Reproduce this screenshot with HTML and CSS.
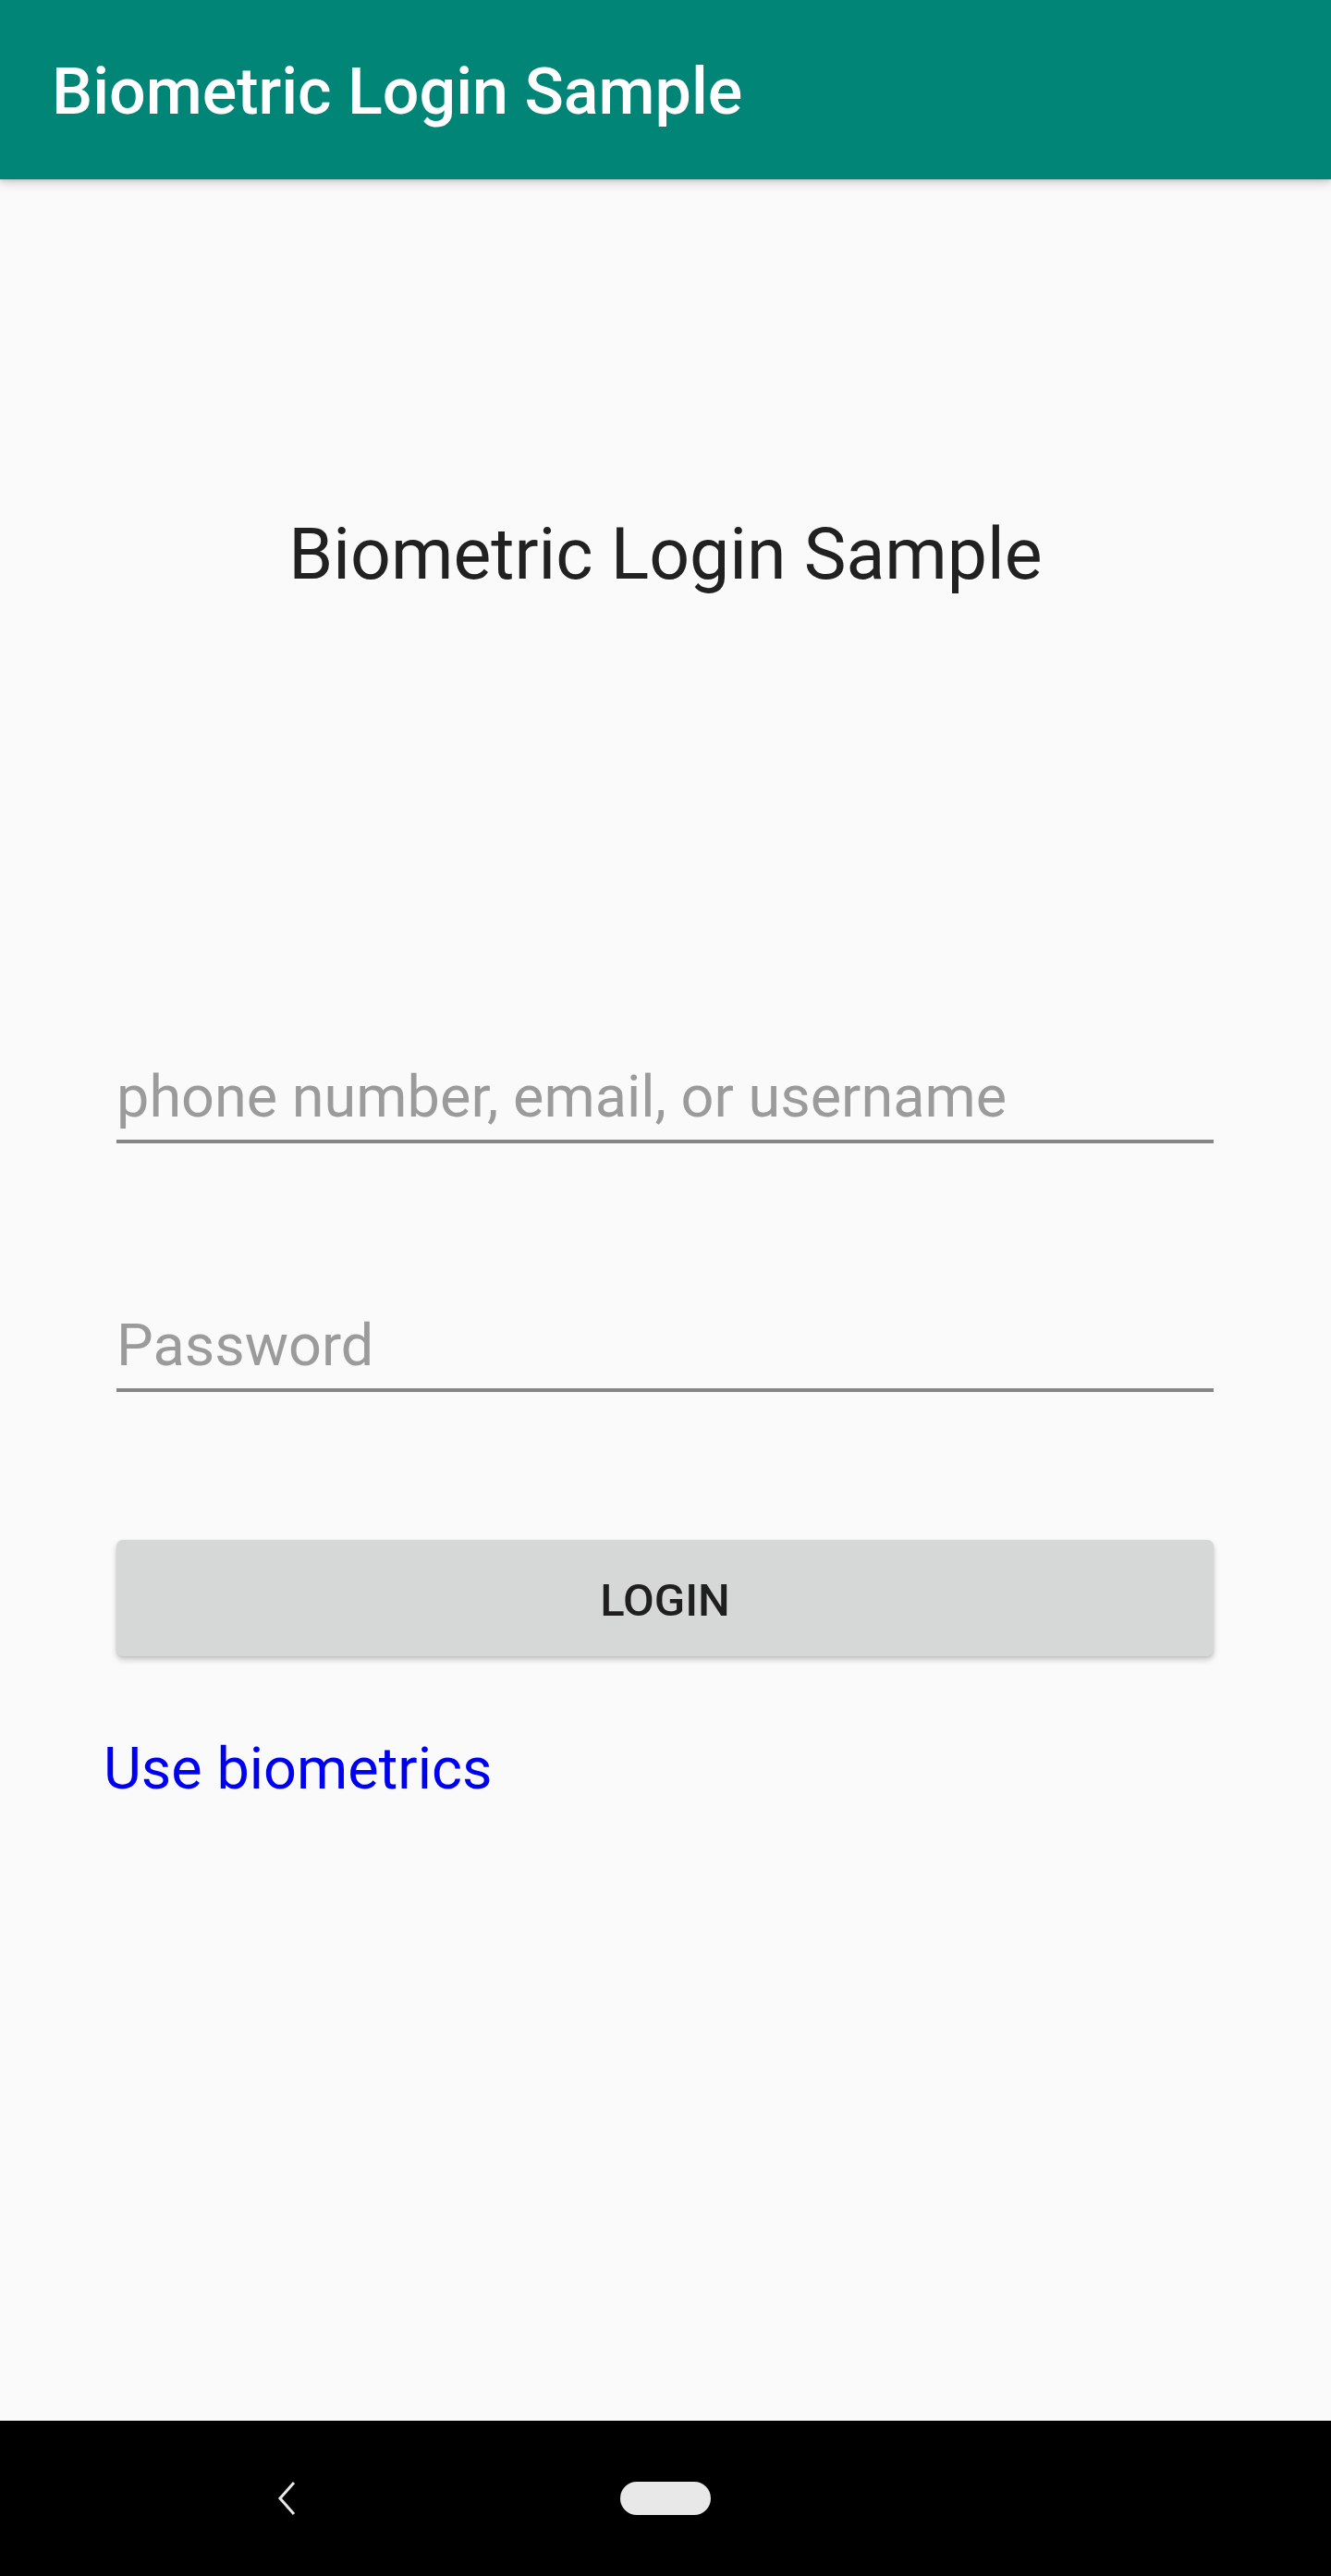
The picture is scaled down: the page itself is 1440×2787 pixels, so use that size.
FILE: index.html
```html
<!DOCTYPE html>
<html lang="en">
<head>
<meta charset="utf-8">
<title>Biometric Login Sample</title>
<link rel="stylesheet" href="styles.css">
</head>
<body>
<div class="screen">
  <header class="appbar">
    <h1 class="appbar-title">Biometric Login Sample</h1>
  </header>
  <main class="content">
    <h2 class="page-title">Biometric Login Sample</h2>
    <form class="login-form">
      <div class="field field-user">
        <input class="field-input" type="text" placeholder="phone number, email, or username">
      </div>
      <div class="field field-pass">
        <input class="field-input" type="password" placeholder="Password">
      </div>
      <button class="login-btn" type="button">LOGIN</button>
    </form>
    <a class="bio-link" href="#">Use biometrics</a>
  </main>
  <nav class="navbar">
    <div class="nav-back">
      <svg width="22" height="38" viewBox="0 0 22 38" aria-hidden="true">
        <polyline points="18,2 3,19 18,36" fill="none" stroke="#e8e8e8" stroke-width="3" stroke-linejoin="miter"/>
      </svg>
    </div>
    <div class="nav-home"></div>
    <div class="nav-spacer"></div>
  </nav>
</div>
</body>
</html>
```

FILE: styles.css
```css
* { box-sizing: border-box; }
html, body { margin: 0; padding: 0; }
body {
  background: #fafafa;
  font-family: Roboto, "Noto Sans", "Liberation Sans", sans-serif;
}
.screen {
  width: 1440px;
  height: 2787px;
  display: flex;
  flex-direction: column;
  background: #fafafa;
}
.appbar {
  height: 194px;
  flex: 0 0 194px;
  background: #008577;
  display: flex;
  align-items: center;
  padding: 4px 0 0 56px;
  box-shadow: 0 4px 10px rgba(0,0,0,0.18), 0 1px 3px rgba(0,0,0,0.12);
  position: relative;
  z-index: 2;
}
.appbar-title {
  margin: 0;
  color: #ffffff;
  font-size: 70px;
  font-weight: 500;
  line-height: 82px;
}
.content {
  flex: 1;
  display: flex;
  flex-direction: column;
}
.page-title {
  margin: 361px 0 0;
  text-align: center;
  font-size: 77px;
  font-weight: 400;
  line-height: 90px;
  color: #212121;
}
.login-form {
  display: flex;
  flex-direction: column;
  padding: 0 127px 0 126px;
}
.field {
  border-bottom: 4px solid #868686;
  padding-bottom: 9px;
}
.field-user { margin-top: 505px; }
.field-pass { margin-top: 182px; }
.field-input {
  display: block;
  width: 100%;
  border: 0;
  outline: none;
  background: transparent;
  padding: 0;
  margin: 0;
  font-family: Roboto, "Noto Sans", "Liberation Sans", sans-serif;
  font-size: 63px;
  line-height: 74px;
  height: 74px;
  color: #212121;
}
.field-input::placeholder { color: #9b9b9b; opacity: 1; }
.login-btn {
  margin-top: 160px;
  height: 126px;
  border: 0;
  border-radius: 7px;
  background: #d6d7d7;
  color: #1f1f1f;
  font-family: Roboto, "Noto Sans", "Liberation Sans", sans-serif;
  font-size: 49px;
  font-weight: 500;
  letter-spacing: 0;
  padding: 4px 0 0;
  box-shadow: 0 4px 6px rgba(0,0,0,0.18), 0 1px 3px rgba(0,0,0,0.10);
}
.bio-link {
  align-self: flex-start;
  margin: 85px 0 0 112px;
  font-size: 63px;
  line-height: 74px;
  color: #0000f0;
  text-decoration: none;
}
.navbar {
  height: 168px;
  flex: 0 0 168px;
  background: #000000;
  display: grid;
  grid-template-columns: 1fr auto 1fr;
  align-items: center;
}
.nav-back {
  justify-self: end;
  margin-right: 349px;
  display: flex;
}
.nav-home {
  width: 98px;
  height: 36px;
  border-radius: 18px;
  background: #e8e8e8;
}
```
